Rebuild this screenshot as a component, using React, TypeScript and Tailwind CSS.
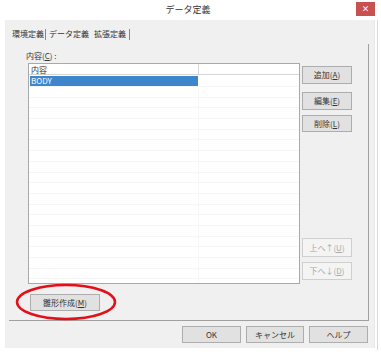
import React from "react";

function Btn({ label, disabled, className }: { label: React.ReactNode; disabled?: boolean; className: string }) {
    return (
        <div
            className={`flex items-center justify-center border text-[8px] leading-none ${
                disabled ? "border-[#cfcfcf] bg-[#f4f4f4] text-[#a8a8a8]" : "border-[#adadad] bg-[#e1e1e1] text-[#333]"
            } ${className}`}
        >
            {label}
        </div>
    );
}

function Key({ k }: { k: string }) {
    return <span className="underline underline-offset-1">{k}</span>;
}

export default function App() {
    const rows = Array.from({ length: 19 });
    return (
        <div className="relative w-[381px] h-[356px] bg-white font-['Noto_Sans_CJK_JP',sans-serif] text-[#333] overflow-hidden">
            {/* title bar */}
            <div className="flex h-[20px] items-start">
                <div className="flex-1 pt-[5px] text-center text-[9px] leading-none pl-[20px]">データ定義</div>
                <div className="mt-[2px] mr-[6px] flex h-[14px] w-[19px] items-center justify-center bg-[#c75050] text-[8px] font-bold leading-none text-white">
                    ×
                </div>
            </div>

            <div className="flex h-[328px] w-[370px] ml-[5px] flex-col bg-[#f0f0f0] border-r border-[#e8e8e8]">
                {/* tabs */}
                <div className="flex items-center h-[24px] pl-[7px] pt-[4px] text-[8px] leading-none">
                    <span>環境定義</span>
                    <span className="mx-[1px] h-[11px] w-px bg-[#888]" />
                    <span className="ml-[2px]">データ定義</span>
                    <span className="ml-[5px]">拡張定義</span>
                    <span className="ml-[3px] h-[11px] w-px bg-[#888]" />
                </div>

                {/* panel */}
                <div className="ml-[4px] w-[360px] h-[277px] border-r border-b border-[#a0a0a0] flex flex-col">
                    <div className="pl-[17px] pt-[8px] text-[8px] leading-none h-[19px]">
                        内容(<Key k="C" />) :
                    </div>
                    <div className="flex">
                        <div className="ml-[19px] w-[272px] h-[221px] border border-[#a9a9a9] bg-white overflow-hidden">
                            <div className="flex h-[11px] border-b border-[#d5d5d5] text-[8px] leading-[11px]">
                                <div className="w-[170px] border-r border-[#d5d5d5] pl-[2px]">内容</div>
                                <div className="flex-1" />
                            </div>
                            <div className="h-[1px]" />
                            <div className="flex h-[10px]">
                                <div className="w-[168px] ml-[1px] bg-[#3d86cc] text-white text-[8px] leading-[10px] pl-[1px]">BODY</div>
                                <div className="flex-1" />
                            </div>
                            {rows.map((_, i) => (
                                <div key={i} className="flex h-[10.7px] border-t border-[#f6f6f6]">
                                    <div className="w-[170px] border-r border-[#f8f8f8]" />
                                    <div className="flex-1" />
                                </div>
                            ))}
                        </div>
                        <div className="ml-[2px] w-[50px] flex flex-col">
                            <Btn className="mt-[3px] h-[18px]" label={<>追加(<Key k="A" />)</>} />
                            <Btn className="mt-[8px] h-[18px]" label={<>編集(<Key k="E" />)</>} />
                            <Btn className="mt-[5px] h-[17px]" label={<>削除(<Key k="L" />)</>} />
                            <Btn disabled className="mt-[106px] h-[19px]" label={<>上へ↑(<Key k="U" />)</>} />
                            <Btn disabled className="mt-[5px] h-[18px]" label={<>下へ↓(<Key k="D" />)</>} />
                        </div>
                    </div>
                    <div className="pl-[21px] pt-[10px]">
                        <Btn className="w-[70px] h-[17px]" label={<>雛形作成(<Key k="M" />)</>} />
                    </div>
                </div>

                {/* bottom buttons */}
                <div className="flex gap-[5px] pl-[177px] pt-[5px]">
                    <Btn className="w-[59px] h-[17px]" label="OK" />
                    <Btn className="w-[58px] h-[17px]" label="キャンセル" />
                    <Btn className="w-[59px] h-[17px]" label="ヘルプ" />
                </div>
            </div>
            <div className="absolute right-[3px] top-[20px] h-[330px] w-px bg-[#d8d8d8]" />

            {/* annotation */}
            <svg className="absolute left-0 top-0 pointer-events-none" width="381" height="356">
                <ellipse cx="66" cy="302" rx="49" ry="17" fill="none" stroke="#e3101a" strokeWidth="2.5" />
            </svg>
        </div>
    );
}
